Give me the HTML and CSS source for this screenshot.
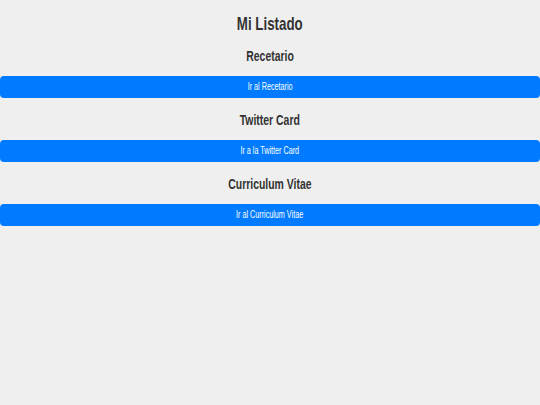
FILE: index.html
```html
<!DOCTYPE html>
<html>

<head>
  <meta charset="UTF-8">
  <meta name="viewport" content="width=device-width, initial-scale=1">
  <title>Mi Listado</title>
  <link rel="stylesheet" href="styles.css">
</head>

<body>
  <h1 class="title"><span class="narrow">Mi Listado</span></h1>
  <div class="item">
    <h2 class="item-title"><span class="narrow">Recetario</span></h2>
    <a class="item-link" href="#"><span class="narrow">Ir al Recetario</span></a>
  </div>
  <div class="item">
    <h2 class="item-title"><span class="narrow">Twitter Card</span></h2>
    <a class="item-link" href="#"><span class="narrow">Ir a la Twitter Card</span></a>
  </div>
  <div class="item">
    <h2 class="item-title"><span class="narrow">Curriculum Vitae</span></h2>
    <a class="item-link" href="#"><span class="narrow">Ir al Curriculum Vitae</span></a>
  </div>
</body>

</html>
```

FILE: styles.css
```css
body {
  margin: 0;
  background-color: #EFEFEF;
  font-family: "Liberation Sans", Arial, sans-serif;
  color: #333333;
}

.narrow {
  display: inline-block;
  transform: scaleX(0.72);
  white-space: nowrap;
}

.title {
  margin: 14px 0 0;
  font-size: 18.5px;
  line-height: 20px;
  text-align: center;
}

.item-title {
  margin: 13px 0 11px;
  font-size: 14.5px;
  line-height: 18px;
  text-align: center;
}

.item-link {
  display: block;
  height: 22px;
  line-height: 22px;
  border-radius: 4px;
  background-color: #007BFF;
  color: #FFFFFF;
  font-size: 10px;
  text-align: center;
  text-decoration: none;
}
```
